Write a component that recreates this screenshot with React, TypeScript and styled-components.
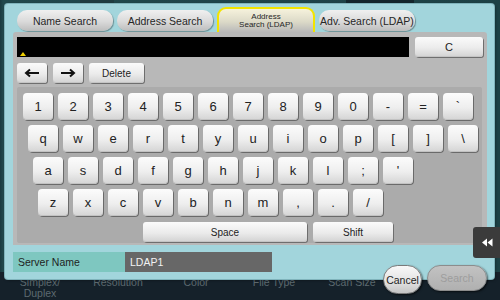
import styled, { createGlobalStyle } from "styled-components";

const GlobalStyle = createGlobalStyle`
  html, body {
    margin: 0;
    padding: 0;
    background: #16232b;
  }
  body {
    font-family: "Liberation Sans", Arial, sans-serif;
  }
`;

const Screen = styled.div`
  position: relative;
  width: 500px;
  height: 300px;
  overflow: hidden;
  background: linear-gradient(to right, #1a3a3f 0, #21484c 3px, #1d4145 100%);
  display: flex;
  flex-direction: column;
  justify-content: space-between;
`;

const TopStrip = styled.div`
  display: flex;
  height: 4px;
  padding-left: 80px;
  gap: 232px;
`;

const TopMark = styled.div<{ $w: number; $yellow?: boolean }>`
  width: ${(p) => p.$w}px;
  background: ${(p) => (p.$yellow ? "#1f3c40" : "#14262c")};
  border-bottom: 1px solid ${(p) => (p.$yellow ? "#c9b820" : "#0f1d22")};
`;

const FunctionBar = styled.div`
  height: 28px;
  background: #15212a;
  display: grid;
  grid-template-columns: repeat(5, 78px);
  padding: 5px 0 0 1px;
  box-sizing: border-box;
`;

const FunctionLabel = styled.div`
  color: #5d6a70;
  font-size: 10.5px;
  line-height: 11px;
  text-align: center;
`;

const Dialog = styled.div`
  position: absolute;
  left: 5px;
  top: 4px;
  width: 489px;
  height: 275px;
  background: #a2d5dc;
  border-radius: 3px;
  box-shadow: 0 0 0 1px #7fb3bb, 1px 1px 3px rgba(0, 0, 0, 0.5);
  display: flex;
  flex-direction: column;
`;

const TabRow = styled.div`
  display: flex;
  align-items: flex-end;
  gap: 4px;
  height: 25px;
  padding: 3px 0 0 12px;
`;

const Tab = styled.div<{ $active?: boolean }>`
  box-sizing: border-box;
  width: ${(p) => (p.$active ? 98 : 96)}px;
  height: ${(p) => (p.$active ? 25 : 21)}px;
  margin-bottom: ${(p) => (p.$active ? 0 : 1)}px;
  display: flex;
  align-items: center;
  justify-content: center;
  text-align: center;
  color: #262626;
  font-size: ${(p) => (p.$active ? 8 : 10.5)}px;
  line-height: ${(p) => (p.$active ? 8 : 12)}px;
  border-radius: ${(p) => (p.$active ? "9px 9px 0 0" : "10px")};
  border: ${(p) => (p.$active ? "2px solid #f2e400" : "none")};
  border-bottom: none;
  background: ${(p) =>
    p.$active
      ? "linear-gradient(#f6f2dc, #dcdac8 55%, #b9b9b9)"
      : "linear-gradient(#f0f0f0, #dadada 55%, #bdbdbd)"};
  box-shadow: ${(p) => (p.$active ? "none" : "1px 1px 1px #6c8f94")};
`;

const KeyboardArea = styled.div`
  box-sizing: border-box;
  margin-left: 8px;
  width: 474px;
  height: 213px;
  padding: 5px 4px 2px 4px;
  background: #b8b8b8;
  border-radius: 3px 3px 0 0;
  display: flex;
  flex-direction: column;
`;

const InputRow = styled.div`
  display: flex;
  gap: 6px;
  height: 20px;
`;

const InputBox = styled.div`
  position: relative;
  flex: 1;
  background: #000;
`;

const Caret = styled.div`
  position: absolute;
  left: 3px;
  bottom: 1px;
  width: 0;
  height: 0;
  border-left: 3px solid transparent;
  border-right: 3px solid transparent;
  border-bottom: 4px solid #f0d000;
`;

const ArrowRow = styled.div`
  display: flex;
  gap: 6px;
  height: 20px;
  margin-top: 6px;
`;

const Button = styled.div<{ $w: number }>`
  box-sizing: border-box;
  width: ${(p) => p.$w}px;
  height: 100%;
  display: flex;
  align-items: center;
  justify-content: center;
  color: #222;
  font-size: 10px;
  border-radius: 3px;
  background: linear-gradient(#fbfbfb, #ebebeb 55%, #d2d2d2);
  box-shadow: 1px 1px 0 #6e6e6e, inset 0 -1px 0 #c4c4c4;
`;

const KeyPanel = styled.div`
  flex: 1;
  margin: 4px 1px 0 0;
  padding: 6px 0 0 6px;
  background: #ababab;
  border-radius: 2px;
  display: flex;
  flex-direction: column;
  gap: 5px;
`;

const KeyRow = styled.div<{ $indent: number }>`
  display: flex;
  gap: 5px;
  padding-left: ${(p) => p.$indent}px;
`;

const BottomKeys = styled.div`
  display: flex;
  gap: 6px;
  height: 20px;
  margin-top: 1px;
  padding-left: 120px;
`;

const Key = styled.div`
  width: 30px;
  height: 27px;
  display: flex;
  align-items: center;
  justify-content: center;
  padding-bottom: 1px;
  box-sizing: border-box;
  color: #222;
  font-size: 13px;
  border-radius: 4px;
  background: linear-gradient(#fcfcfc, #eeeeee 55%, #d4d4d4);
  box-shadow: 1px 1px 0 #6a6a6a, inset 0 -1px 0 #c2c2c2;
`;

const ServerRow = styled.div`
  display: flex;
  height: 20px;
  margin: 7px 0 0 8px;
  font-size: 10.5px;
  line-height: 20px;
`;

const ServerLabel = styled.div`
  width: 112px;
  padding-left: 5px;
  box-sizing: border-box;
  background: #7ec7c0;
  color: #1e1e1e;
`;

const ServerValue = styled.div`
  width: 147px;
  padding-left: 5px;
  box-sizing: border-box;
  background: #676767;
  color: #f2f2f2;
`;

const SideTab = styled.div`
  position: absolute;
  right: 0;
  top: 227px;
  width: 27px;
  height: 31px;
  background: #3b3b3b;
  border-radius: 3px 0 0 3px;
  display: flex;
  align-items: center;
  justify-content: center;
`;

const ActionBar = styled.div`
  position: absolute;
  left: 383px;
  top: 265px;
  display: flex;
  align-items: flex-start;
  gap: 5px;
`;

const PillButton = styled.div<{ $disabled?: boolean }>`
  box-sizing: border-box;
  width: ${(p) => (p.$disabled ? 60 : 39)}px;
  height: ${(p) => (p.$disabled ? 26 : 29)}px;
  border-radius: 15px;
  display: flex;
  align-items: center;
  justify-content: center;
  font-size: 10.5px;
  color: ${(p) => (p.$disabled ? "#9d9d9d" : "#1e1e1e")};
  background: ${(p) =>
    p.$disabled
      ? "linear-gradient(#c2c2c2, #b0b0b0)"
      : "linear-gradient(#f8f8f8, #e4e4e4 55%, #c4c4c4)"};
  border: 1px solid ${(p) => (p.$disabled ? "#8c8c8c" : "#7a7a7a")};
  box-shadow: 1px 1px 2px rgba(0, 0, 0, 0.6);
`;

const rows: Array<{ indent: number; keys: string[] }> = [
  { indent: 0, keys: ["1", "2", "3", "4", "5", "6", "7", "8", "9", "0", "-", "=", "`"] },
  { indent: 5, keys: ["q", "w", "e", "r", "t", "y", "u", "i", "o", "p", "[", "]", "\\"] },
  { indent: 10, keys: ["a", "s", "d", "f", "g", "h", "j", "k", "l", ";", "'"] },
  { indent: 15, keys: ["z", "x", "c", "v", "b", "n", "m", ",", ".", "/"] },
];

const tabs = ["Name Search", "Address Search", "Address\nSearch (LDAP)", "Adv. Search (LDAP)"];

const App = () => {
  return (
    <>
      <GlobalStyle />
      <Screen>
        <TopStrip>
          <TopMark $w={34} $yellow />
          <TopMark $w={68} />
        </TopStrip>
        <FunctionBar>
          <FunctionLabel>
            Simplex/
            <br />
            Duplex
          </FunctionLabel>
          <FunctionLabel>Resolution</FunctionLabel>
          <FunctionLabel>Color</FunctionLabel>
          <FunctionLabel>File Type</FunctionLabel>
          <FunctionLabel>Scan Size</FunctionLabel>
        </FunctionBar>

        <Dialog>
          <TabRow>
            {tabs.map((t, i) => (
              <Tab key={t} $active={i === 2}>
                {i === 2 ? (
                  <span>
                    Address
                    <br />
                    Search (LDAP)
                  </span>
                ) : (
                  t
                )}
              </Tab>
            ))}
          </TabRow>

          <KeyboardArea>
            <InputRow>
              <InputBox>
                <Caret />
              </InputBox>
              <Button $w={68} style={{ fontSize: 11 }}>C</Button>
            </InputRow>
            <ArrowRow>
              <Button $w={30}>
                <svg width="16" height="10" viewBox="0 0 16 10">
                  <path d="M15 5H3M6 1.5L2 5l4 3.5" stroke="#111" strokeWidth="2" fill="none" />
                </svg>
              </Button>
              <Button $w={30}>
                <svg width="16" height="10" viewBox="0 0 16 10">
                  <path d="M1 5h12M10 1.5L14 5l-4 3.5" stroke="#111" strokeWidth="2" fill="none" />
                </svg>
              </Button>
              <Button $w={55}>Delete</Button>
            </ArrowRow>
            <KeyPanel>
              {rows.map((row) => (
                <KeyRow key={row.keys[0]} $indent={row.indent}>
                  {row.keys.map((k) => (
                    <Key key={k}>{k}</Key>
                  ))}
                </KeyRow>
              ))}
              <BottomKeys>
                <Button $w={164}>Space</Button>
                <Button $w={80}>Shift</Button>
              </BottomKeys>
            </KeyPanel>
          </KeyboardArea>

          <ServerRow>
            <ServerLabel>Server Name</ServerLabel>
            <ServerValue>LDAP1</ServerValue>
          </ServerRow>
        </Dialog>

        <SideTab>
          <svg width="12" height="9" viewBox="0 0 12 9">
            <path d="M6 0.5L1 4.5l5 4zM11.5 0.5l-5 4 5 4z" fill="#fff" />
          </svg>
        </SideTab>

        <ActionBar>
          <PillButton>Cancel</PillButton>
          <PillButton $disabled>Search</PillButton>
        </ActionBar>
      </Screen>
    </>
  );
};

export default App;
